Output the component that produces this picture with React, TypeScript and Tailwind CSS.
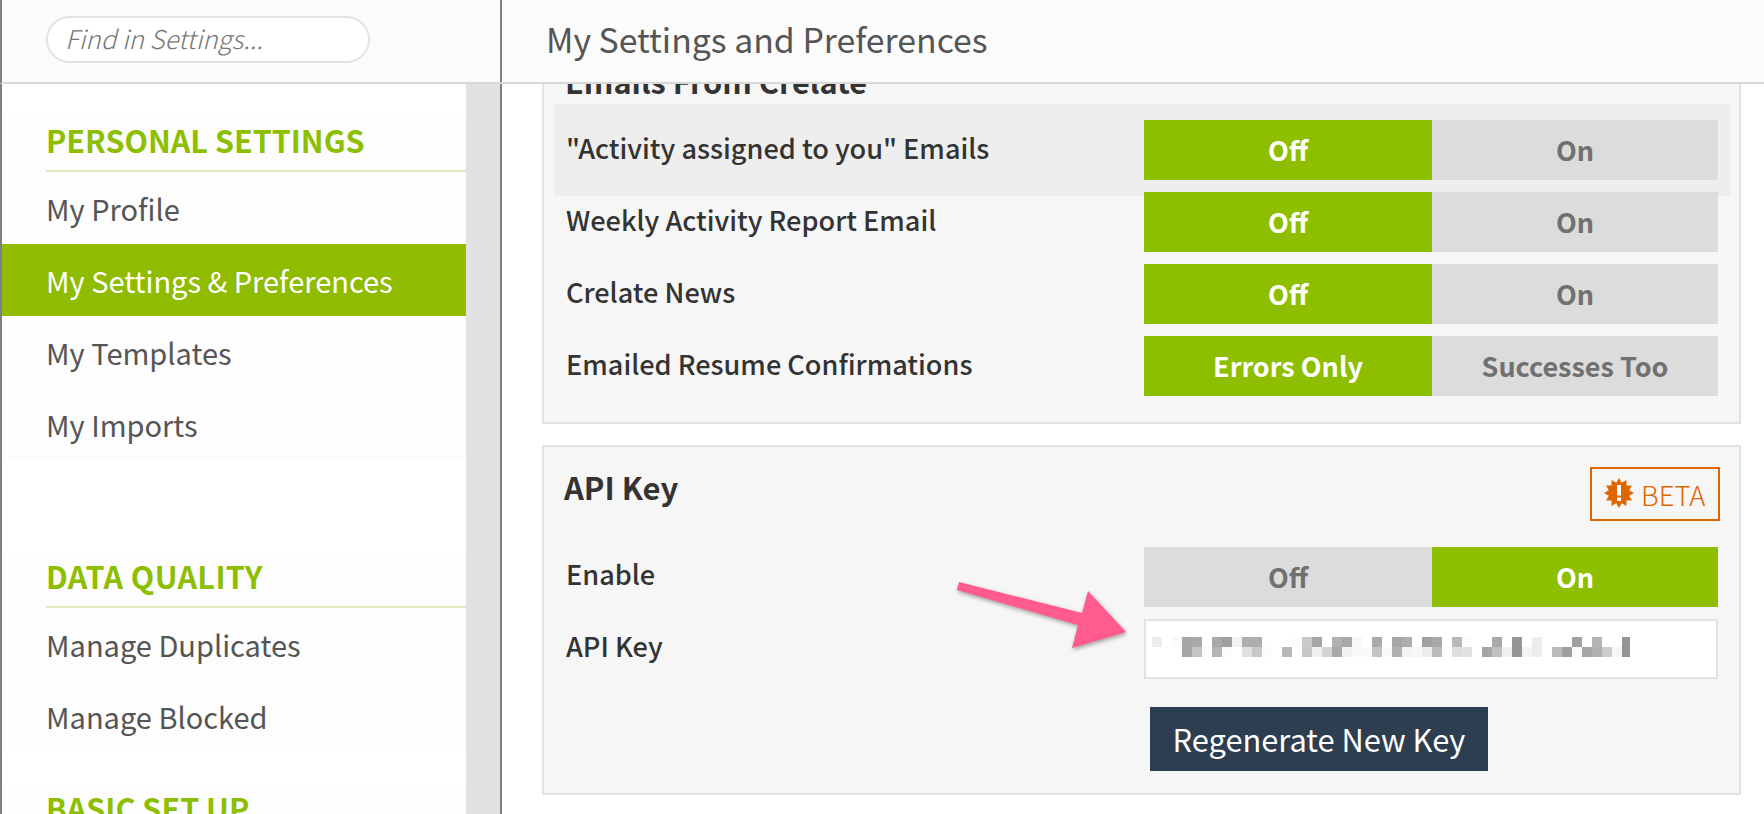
import React from "react";

const FONT = "font-['Noto_Sans_CJK_SC','Source_Sans_Pro',sans-serif]";

function NavHead({ children, wide }: { children: React.ReactNode; wide?: boolean }) {
  return (
    <div
      className={
        "h-[54px] ml-[44px] border-b-2 border-[#dfeabb] text-[30.5px] leading-[44px] font-bold text-[#8dbe00] uppercase " +
        (wide ? "tracking-[0.4px]" : "")
      }
    >
      {children}
    </div>
  );
}

function NavItem({ children, active }: { children: React.ReactNode; active?: boolean }) {
  return (
    <div
      className={
        "h-[72px] pl-[44px] flex items-center text-[29px] leading-[40px] " +
        (active ? "bg-[#8fbb00] text-white" : "text-[#555555]")
      }
    >
      {children}
    </div>
  );
}

function Toggle({ a, b, right }: { a: string; b: string; right?: boolean }) {
  const on = "bg-[#8dbe00] text-white";
  const off = "bg-[#dcdcdc] text-[#707070]";
  return (
    <div className="flex w-[574px] h-[60px] text-[27px] font-bold leading-[40px]">
      <div className={"w-[288px] flex items-center justify-center " + (right ? off : on)}>{a}</div>
      <div className={"w-[286px] flex items-center justify-center " + (right ? on : off)}>{b}</div>
    </div>
  );
}

function Row({
  label,
  children,
  highlight,
  up,
}: {
  label: string;
  children: React.ReactNode;
  highlight?: boolean;
  up?: boolean;
}) {
  return (
    <div
      className={
        "h-[92px] -mb-[20px] ml-[10px] mr-[9px] pl-[12px] pr-[12px] py-[16px] flex items-center justify-between " +
        (highlight ? "bg-[#eeeeee]" : "")
      }
    >
      <div className={"text-[27.1px] leading-[40px] font-medium text-[#333333] " + (up ? "-mt-[6px]" : "-mt-[4px]")}>
        {label}
      </div>
      {children}
    </div>
  );
}

const R1 = [
  "ececec","ffffff","fafafa","a6a6a6","a9a9a9","ffffff","a8a8a8","a0a0a0","f2f2f2","aeaeae","aeaeae","ffffff",
  "ffffff","ffffff","fdfdfd","cacaca","a6a6a6","ffffff","b0b0b0","a8a8a8","f8f8f8","ffffff","aaaaaa","ffffff",
  "a6a6a6","aeaeae","ffffff","a0a0a0","a8a8a8","ffffff","b8b8b8","fcfcfc","ffffff","ffffff","a8a8a8","ffffff",
  "969696","ffffff","ececec","ffffff","ffffff","ffffff","a0a0a0","ffffff","b4b4b4","ffffff","ffffff","949494",
];
const R2 = [
  "ffffff","ffffff","ffffff","a6a6a6","c4c4c4","fafafa","b4b4b4","fcfcfc","ffffff","e0e0e0","c8c8c8","fcfcfc",
  "ffffff","b8b8b8","ffffff","c6c6c6","f0f0f0","d4d4d4","a8a8a8","f2f2f2","fafafa","fafafa","c4c4c4","fafafa",
  "b0b0b0","f4f4f4","f8f8f8","ececec","bcbcbc","fcfcfc","dedede","e2e2e2","ffffff","a6a6a6","c0c0c0","f0f0f0",
  "969696","f4f4f4","ececec","ffffff","bcbcbc","a0a0a0","fafafa","a6a6a6","b0b0b0","cccccc","f6f6f6","949494",
];

function Mosaic() {
  return (
    <svg width="480" height="20" viewBox="0 0 480 20" shapeRendering="crispEdges" className="ml-[6px] -mt-[4px]">
      {R1.map((c, i) => (
        <rect key={"a" + i} x={i * 10} y={0} width={i === 47 ? 8 : 10} height={10} fill={"#" + c} />
      ))}
      {R2.map((c, i) => (
        <rect key={"b" + i} x={i * 10} y={10} width={i === 47 ? 8 : 10} height={10} fill={"#" + c} />
      ))}
    </svg>
  );
}

function Burst() {
  const pts: string[] = [];
  const n = 12;
  for (let i = 0; i < n * 2; i++) {
    const r = i % 2 === 0 ? 15 : 10.5;
    const t = (Math.PI * i) / n - Math.PI / 2;
    pts.push((15 + r * Math.cos(t)).toFixed(2) + "," + (15 + r * Math.sin(t)).toFixed(2));
  }
  return (
    <svg width="30" height="30" viewBox="0 0 30 30" className="shrink-0 -mt-[3px]">
      <polygon points={pts.join(" ")} fill="#dd6600" />
      <rect x="13" y="7" width="4" height="10.5" fill="#fff" />
      <rect x="13" y="19.5" width="4" height="3.5" fill="#fff" />
    </svg>
  );
}

export default function App() {
  return (
    <div className={"relative w-[1764px] h-[814px] overflow-hidden flex flex-col bg-white " + FONT}>
      <div className="h-[84px] shrink-0 flex bg-[#fbfbfb] border-b-2 border-[#d8d8d8] border-l-2 border-l-[#808080]">
        <div className="w-[500px] shrink-0 border-r-2 border-[#808080] pl-[44px] pt-[16px]">
          <div className="w-[324px] h-[47px] rounded-full border-2 border-[#e2e2e2] bg-white pl-[17px] text-[25.8px] leading-[40px] italic font-light text-[#777777]">
            Find in Settings...
          </div>
        </div>
        <div className="flex-1 pl-[44px] text-[33.8px] leading-[78px] text-[#555555]">My Settings and Preferences</div>
      </div>
      <div className="flex-1 min-h-0 flex">
        <div className="w-[502px] shrink-0 flex border-l-2 border-l-[#808080] border-r-2 border-r-[#808080]">
          <div className="w-[464px] shrink-0 overflow-hidden pt-[34px]">
            <div className="bg-[#fdfdfd]">
              <NavHead>Personal Settings</NavHead>
              <NavItem>My Profile</NavItem>
              <NavItem active>My Settings &amp; Preferences</NavItem>
              <NavItem>My Templates</NavItem>
              <NavItem>My Imports</NavItem>
            </div>
            <div className="h-[94px]" />
            <div className="bg-[#fdfdfd]">
              <NavHead wide>Data Quality</NavHead>
              <NavItem>Manage Duplicates</NavItem>
              <NavItem>Manage Blocked</NavItem>
            </div>
            <div className="h-[34px]" />
            <div className="bg-[#fdfdfd]">
              <NavHead>Basic Set Up</NavHead>
            </div>
          </div>
          <div className="flex-1 bg-[#e2e2e2]" />
        </div>
        <div className="flex-1 min-w-0 overflow-hidden">
          <div className="-mt-[40px] ml-[40px] w-[1199px] flex flex-col gap-[21px]">
            <div className="border-2 border-[#e2e2e2] bg-[#f6f6f6] pb-[30px]">
              <div className="h-[58px] pl-[21px] pt-[15px] text-[30.7px] leading-[40px] font-bold text-[#333333]">
                Emails From Crelate
              </div>
              <Row label={'"Activity assigned to you" Emails'} highlight>
                <Toggle a="Off" b="On" />
              </Row>
              <Row label="Weekly Activity Report Email">
                <Toggle a="Off" b="On" />
              </Row>
              <Row label="Crelate News">
                <Toggle a="Off" b="On" />
              </Row>
              <Row label="Emailed Resume Confirmations">
                <Toggle a="Errors Only" b="Successes Too" />
              </Row>
            </div>
            <div className="border-2 border-[#e2e2e2] bg-[#f6f6f6] pb-[22px]">
              <div className="flex items-start justify-between pt-[20px] pr-[19px] pl-[20px] h-[84px]">
                <div className="text-[31px] leading-[40px] font-bold text-[#333333]">API Key</div>
                <div className="w-[130px] h-[54px] border-2 border-[#dd6600] flex items-center gap-[7px] pl-[12px] text-[27.5px] leading-[40px] font-light text-[#dd6600]">
                  <Burst />
                  BETA
                </div>
              </div>
              <Row label="Enable" up>
                <Toggle a="Off" b="On" right />
              </Row>
              <Row label="API Key" up>
                <div className="w-[574px] h-[60px] border-2 border-[#e2e2e2] bg-white flex items-center">
                  <Mosaic />
                </div>
              </Row>
              <div className="mt-[32px] ml-[606px] w-[338px] h-[64px] bg-[#2c3e50] text-white text-[30.8px] leading-[40px] flex items-center justify-center">
                Regenerate New Key
              </div>
            </div>
          </div>
        </div>
      </div>
      <svg
        width="190"
        height="90"
        viewBox="0 0 190 90"
        className="absolute left-[950px] top-[575px] drop-shadow-[1px_2px_2px_rgba(0,0,0,0.35)]"
      >
        <polygon points="9,7 132,38 138,16 176,57 122,73 128,50 7,15" fill="#ff5b8c" />
      </svg>
    </div>
  );
}
